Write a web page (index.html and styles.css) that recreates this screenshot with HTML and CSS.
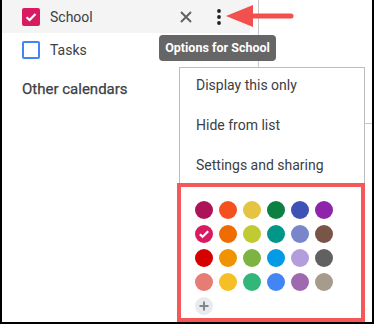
FILE: index.html
```html
<html>
<head>
  <link rel="stylesheet" href="styles.css">
</head>
<body>
  <div class="screen">
    <div class="divider"></div>
    <div class="rule"></div>

    <div class="sidebar">
      <div class="row active">
        <span class="check checked">
          <svg width="14" height="14" viewBox="0 0 14 14"><path d="M2.5 7.2 L5.6 10 L11.5 4" fill="none" stroke="#fff" stroke-width="2.2"/></svg>
        </span>
        <span class="label">School</span>
        <span class="spacer"></span>
        <svg class="close" width="12" height="12" viewBox="0 0 12 12"><path d="M1 1 L11 11 M11 1 L1 11" stroke="#5f6368" stroke-width="2"/></svg>
        <svg class="more" width="6" height="18" viewBox="0 0 6 18"><circle cx="3" cy="3" r="1.9" fill="#202124"/><circle cx="3" cy="9" r="1.9" fill="#202124"/><circle cx="3" cy="15" r="1.9" fill="#202124"/></svg>
      </div>
      <div class="row">
        <span class="check empty"></span>
        <span class="label">Tasks</span>
      </div>
      <div class="heading">Other calendars</div>
    </div>

    <svg class="arrow" width="70" height="26" viewBox="0 0 70 26">
      <path d="M24 13 L65 13" stroke="#f24f4f" stroke-width="5" stroke-linecap="round"/>
      <path d="M0 13 L27 2 L27 24 Z" fill="#f24f4f"/>
    </svg>

    <div class="tooltip">Options for School</div>

    <div class="menu">
      <div class="item">Display this only</div>
      <div class="item">Hide from list</div>
      <div class="item">Settings and sharing</div>
    </div>

    <div class="colors">
      <div class="swatch" style="background:#ad1457"></div>
      <div class="swatch" style="background:#f4511e"></div>
      <div class="swatch" style="background:#e4c441"></div>
      <div class="swatch" style="background:#0b8043"></div>
      <div class="swatch" style="background:#3f51b5"></div>
      <div class="swatch" style="background:#8e24aa"></div>

      <div class="swatch" style="background:#d81b60">
        <svg width="12" height="12" viewBox="0 0 12 12"><path d="M1.8 6.2 L4.6 8.8 L10.2 3.2" fill="none" stroke="#fff" stroke-width="2.2"/></svg>
      </div>
      <div class="swatch" style="background:#ef6c00"></div>
      <div class="swatch" style="background:#c0ca33"></div>
      <div class="swatch" style="background:#009688"></div>
      <div class="swatch" style="background:#7986cb"></div>
      <div class="swatch" style="background:#795548"></div>

      <div class="swatch" style="background:#d50000"></div>
      <div class="swatch" style="background:#f09300"></div>
      <div class="swatch" style="background:#7cb342"></div>
      <div class="swatch" style="background:#039be5"></div>
      <div class="swatch" style="background:#b39ddb"></div>
      <div class="swatch" style="background:#616161"></div>

      <div class="swatch" style="background:#e67c73"></div>
      <div class="swatch" style="background:#f6bf26"></div>
      <div class="swatch" style="background:#33b679"></div>
      <div class="swatch" style="background:#4285f4"></div>
      <div class="swatch" style="background:#9e69af"></div>
      <div class="swatch" style="background:#a79b8e"></div>

      <div class="swatch add">
        <svg width="10" height="10" viewBox="0 0 10 10"><path d="M5 0.5 L5 9.5 M0.5 5 L9.5 5" stroke="#80868b" stroke-width="2"/></svg>
      </div>
    </div>
  </div>
</body>
</html>
```

FILE: styles.css
```css
body {
  margin: 0;
  font-family: Roboto, "Liberation Sans", Arial, sans-serif;
  color: #3c4043;
}
.screen {
  position: relative;
  width: 374px;
  height: 324px;
  box-sizing: border-box;
  border-left: 2px solid #000;
  border-right: 2px solid #000;
  border-bottom: 2px solid #000;
  background: #fff;
  overflow: hidden;
}
.divider {
  position: absolute;
  left: 256px;
  top: 0;
  width: 1px;
  height: 67px;
  background: #c8c8c8;
}
.rule {
  position: absolute;
  left: 362px;
  top: 123px;
  width: 10px;
  height: 1px;
  background: #c8c8c8;
}
.sidebar {
  width: 248px;
}
.row {
  display: flex;
  align-items: center;
  height: 33px;
  padding-left: 20px;
  padding-right: 28px;
}
.row.active {
  background: #f4f4f4;
  margin-left: -2px;
  padding-left: 22px;
}
.check {
  display: flex;
  align-items: center;
  justify-content: center;
  width: 18px;
  height: 18px;
  box-sizing: border-box;
  border-radius: 2px;
}
.check.checked {
  background: #d81b60;
}
.check.empty {
  border: 2px solid #4285f4;
}
.label {
  margin-left: 10px;
  font-size: 14px;
  color: #3c4043;
}
.spacer {
  flex: 1;
}
.close {
  margin-right: 24px;
}
.heading {
  margin-top: 14px;
  padding-left: 20px;
  font-size: 15px;
  font-weight: normal;
  color: #3c4043;
  -webkit-text-stroke: 0.25px #3c4043;
}
.arrow {
  position: absolute;
  left: 224px;
  top: 3px;
}
.tooltip {
  position: absolute;
  left: 157px;
  top: 35px;
  width: 117px;
  height: 26px;
  box-sizing: border-box;
  border-radius: 4px;
  background: #666;
  color: #fff;
  font-size: 12.5px;
  font-weight: bold;
  line-height: 26px;
  text-align: center;
}
.menu {
  position: absolute;
  left: 177px;
  top: 67px;
  width: 186px;
  height: 140px;
  box-sizing: border-box;
  border: 1px solid #bdbdbd;
  border-bottom: none;
  background: #fff;
}
.item {
  display: flex;
  align-items: center;
  height: 40px;
  margin-top: -3px;
  margin-bottom: 3px;
  padding-left: 16px;
  font-size: 14px;
  color: #3c4043;
}
.colors {
  position: absolute;
  left: 175px;
  top: 183px;
  width: 188px;
  height: 139px;
  box-sizing: border-box;
  border: 4px solid #f55858;
  background: #fff;
  padding: 14px 0 0 14px;
  display: grid;
  grid-template-columns: repeat(6, 18px);
  grid-auto-rows: 18px;
  gap: 6px;
}
.swatch {
  display: flex;
  align-items: center;
  justify-content: center;
  width: 18px;
  height: 18px;
  border-radius: 50%;
}
.swatch.add {
  background: #e8eaed;
}
```
